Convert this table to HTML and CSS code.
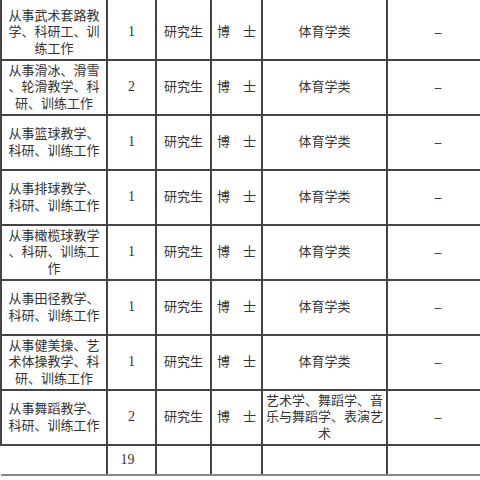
FILE: index.html
```html
<!DOCTYPE html>
<html lang="zh">
<head>
<meta charset="utf-8">
<link rel="stylesheet" href="styles.css">
</head>
<body>
<table class="jobs">
  <colgroup>
    <col class="c1"><col class="c2"><col class="c3"><col class="c4"><col class="c5"><col class="c6">
  </colgroup>
  <tbody>
    <tr class="row row-first">
      <td>从事武术套路教<br>学、科研工、训<br>练工作</td>
      <td class="num">1</td><td>研究生</td><td>博　士</td><td>体育学类</td><td class="dash">–</td>
    </tr>
    <tr class="row">
      <td>从事滑冰、滑雪<br>、轮滑教学、科<br>研、训练工作</td>
      <td class="num">2</td><td>研究生</td><td>博　士</td><td>体育学类</td><td class="dash">–</td>
    </tr>
    <tr class="row">
      <td>从事篮球教学、<br>科研、训练工作</td>
      <td class="num">1</td><td>研究生</td><td>博　士</td><td>体育学类</td><td class="dash">–</td>
    </tr>
    <tr class="row">
      <td>从事排球教学、<br>科研、训练工作</td>
      <td class="num">1</td><td>研究生</td><td>博　士</td><td>体育学类</td><td class="dash">–</td>
    </tr>
    <tr class="row">
      <td>从事橄榄球教学<br>、科研、训练工<br>作</td>
      <td class="num">1</td><td>研究生</td><td>博　士</td><td>体育学类</td><td class="dash">–</td>
    </tr>
    <tr class="row">
      <td>从事田径教学、<br>科研、训练工作</td>
      <td class="num">1</td><td>研究生</td><td>博　士</td><td>体育学类</td><td class="dash">–</td>
    </tr>
    <tr class="row">
      <td>从事健美操、艺<br>术体操教学、科<br>研、训练工作</td>
      <td class="num">1</td><td>研究生</td><td>博　士</td><td>体育学类</td><td class="dash">–</td>
    </tr>
    <tr class="row">
      <td>从事舞蹈教学、<br>科研、训练工作</td>
      <td class="num">2</td><td>研究生</td><td>博　士</td><td>艺术学、舞蹈学、音<br>乐与舞蹈学、表演艺<br>术</td><td class="dash">–</td>
    </tr>
    <tr class="total">
      <td></td><td class="num sum">19</td><td></td><td></td><td></td><td></td>
    </tr>
  </tbody>
</table>
</body>
</html>
```
FILE: styles.css
```css
html, body {
  margin: 0;
  padding: 0;
  background: #fff;
  overflow: hidden;
}

.jobs {
  border-collapse: collapse;
  table-layout: fixed;
  width: 488px;
  font-family: "Liberation Serif", "Noto Sans CJK SC", serif;
  font-size: 13px;
  line-height: 16.5px;
  color: #333;
}

.c1 { width: 106px; }
.c2 { width: 49px; }
.c3 { width: 55px; }
.c4 { width: 51px; }
.c5 { width: 125px; }
.c6 { width: 102px; }

.jobs td {
  border: 2px solid #444;
  text-align: center;
  vertical-align: middle;
  padding: 0;
  white-space: nowrap;
}

.jobs .num {
  font-size: 14px;
}

.jobs .dash {
  font-weight: bold;
}

.row { height: 55px; }

.row-first { height: 60px; }
.row-first td {
  border-top: none;
  padding-top: 6px;
}

.total { height: 30px; }
.total td {
  border-bottom: 2px solid #888;
}
.total td:first-child {
  border-left: none;
}
.total .sum {
  padding-right: 8px;
}
```
